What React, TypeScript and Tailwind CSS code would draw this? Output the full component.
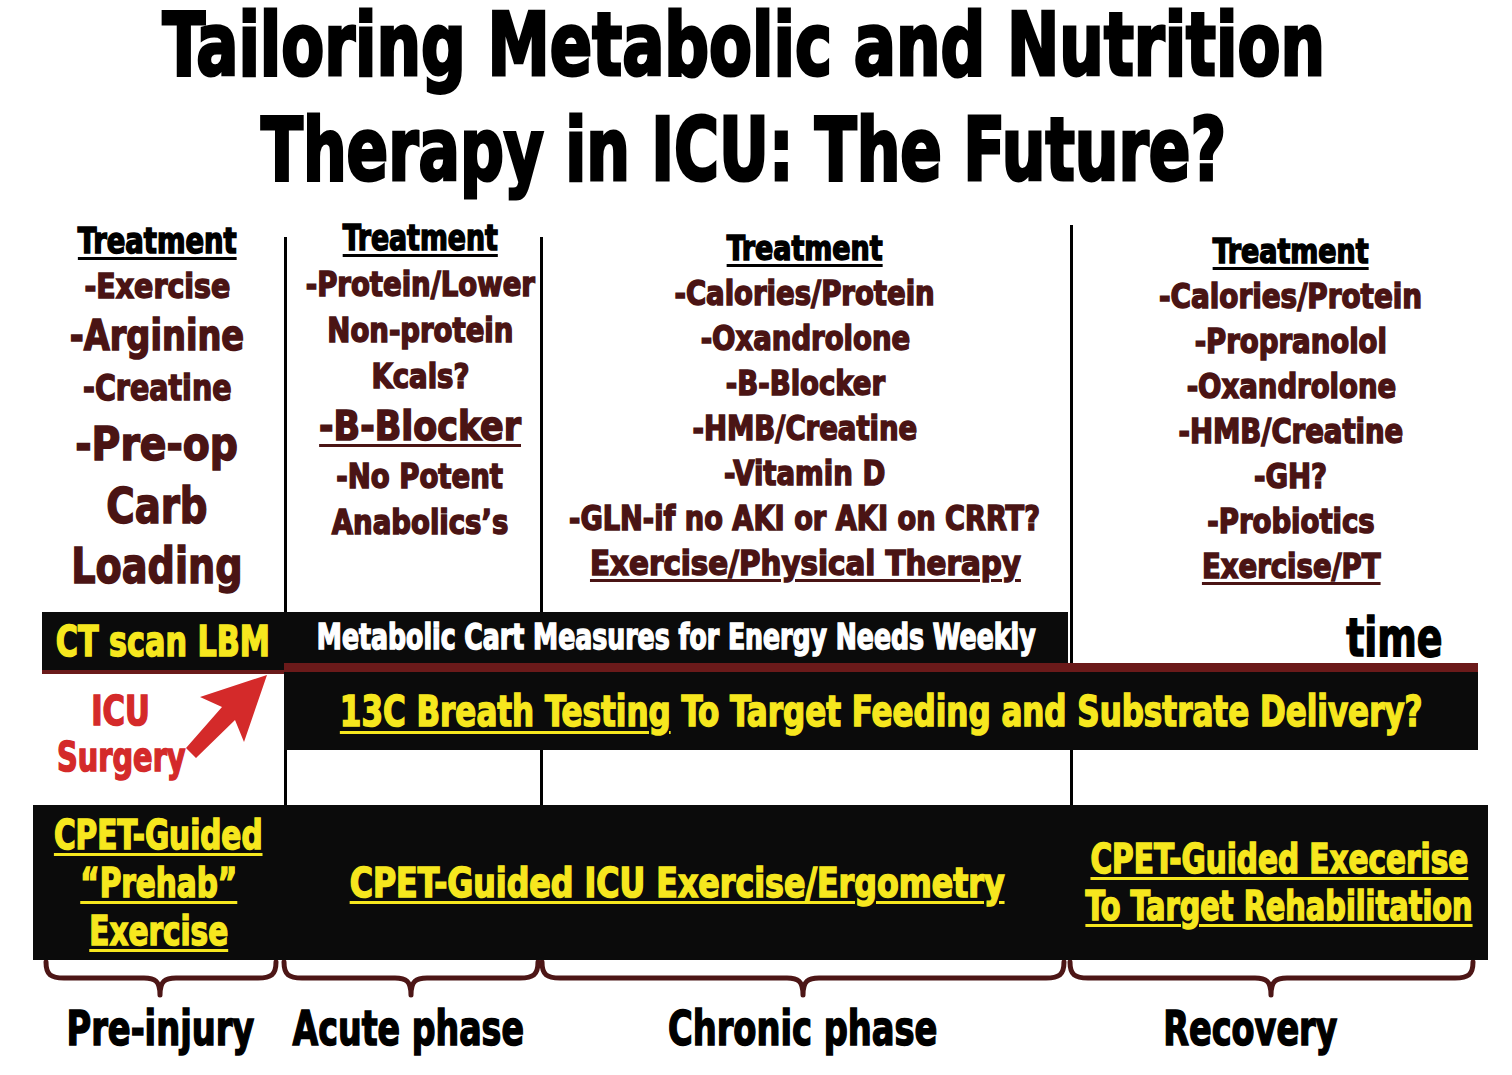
import React from 'react';

type Line = { t: string; cls: string; head?: boolean; u?: boolean };

// DejaVu Sans Condensed is still wider than the Impact-like face, so each line is squeezed with scale-x
const col1: Line[] = [
  { t: 'Treatment', cls: 'text-[35px] leading-[46px] scale-x-[0.87]', head: true },
  { t: '-Exercise', cls: 'text-[34px] leading-[45px] scale-x-[0.93]' },
  { t: '-Arginine', cls: 'text-[42px] leading-[53px] scale-x-[0.89]' },
  { t: '-Creatine', cls: 'text-[36px] leading-[51px] scale-x-[0.88]' },
  { t: '-Pre-op', cls: 'text-[46px] leading-[62px] scale-x-[0.95]' },
  { t: 'Carb', cls: 'text-[50px] leading-[62px] scale-x-[0.86]' },
  { t: 'Loading', cls: 'text-[50px] leading-[58px] scale-x-[0.85]' },
];

const col2: Line[] = [
  { t: 'Treatment', cls: 'text-[35px] leading-[46px] scale-x-[0.85]', head: true },
  { t: '-Protein/Lower', cls: 'text-[34px] leading-[46px] scale-x-[0.9]' },
  { t: 'Non-protein', cls: 'text-[34px] leading-[46px] scale-x-[0.9]' },
  { t: 'Kcals?', cls: 'text-[34px] leading-[46px] scale-x-[0.9]' },
  { t: '-B-Blocker', cls: 'text-[40px] leading-[54px] scale-x-[0.97]', u: true },
  { t: '-No Potent', cls: 'text-[34px] leading-[46px] scale-x-[0.9]' },
  { t: 'Anabolics’s', cls: 'text-[34px] leading-[46px] scale-x-[0.9]' },
];

const col3: Line[] = [
  { t: 'Treatment', cls: 'text-[34px] leading-[45px] scale-x-[0.88]', head: true },
  { t: '-Calories/Protein', cls: 'text-[34px] leading-[45px] scale-x-[0.9]' },
  { t: '-Oxandrolone', cls: 'text-[34px] leading-[45px] scale-x-[0.9]' },
  { t: '-B-Blocker', cls: 'text-[34px] leading-[45px] scale-x-[0.9]' },
  { t: '-HMB/Creatine', cls: 'text-[34px] leading-[45px] scale-x-[0.9]' },
  { t: '-Vitamin D', cls: 'text-[34px] leading-[45px] scale-x-[0.9]' },
  { t: '-GLN-if no AKI or AKI on CRRT?', cls: 'text-[34px] leading-[45px] scale-x-[0.89]' },
  { t: 'Exercise/Physical Therapy', cls: 'text-[34px] leading-[45px] scale-x-[0.96]', u: true },
];

const col4: Line[] = [
  { t: 'Treatment', cls: 'text-[34px] leading-[45px] scale-x-[0.88]', head: true },
  { t: '-Calories/Protein', cls: 'text-[34px] leading-[45px] scale-x-[0.91]' },
  { t: '-Propranolol', cls: 'text-[34px] leading-[45px] scale-x-[0.9]' },
  { t: '-Oxandrolone', cls: 'text-[34px] leading-[45px] scale-x-[0.9]' },
  { t: '-HMB/Creatine', cls: 'text-[34px] leading-[45px] scale-x-[0.9]' },
  { t: '-GH?', cls: 'text-[34px] leading-[45px] scale-x-[0.9]' },
  { t: '-Probiotics', cls: 'text-[34px] leading-[45px] scale-x-[0.9]' },
  { t: 'Exercise/PT', cls: 'text-[34px] leading-[45px] scale-x-[0.9]', u: true },
];

const TreatmentList = ({ lines }: { lines: Line[] }) => (
  <>
    {lines.map((l, i) => (
      <div
        key={i}
        className={`${l.cls} ${l.head ? 'text-black' : 'text-[#4a1414]'} ${
          l.head || l.u ? 'underline decoration-[3px] underline-offset-[4px]' : ''
        }`}
      >
        {l.t}
      </div>
    ))}
  </>
);

// curly brace opening upward, pointing down at xm
const brace = (x0: number, x1: number, xm: number) =>
  `M${x0},0 C${x0},13 ${x0 + 5},16 ${x0 + 18},16 L${xm - 16},16 C${xm - 5},16 ${xm},19 ${xm},33 C${xm},19 ${xm + 5},16 ${xm + 16},16 L${x1 - 18},16 C${x1 - 5},16 ${x1},13 ${x1},0`;

const yu = 'underline decoration-[3px] underline-offset-[4px]';

export default function App() {
  return (
    <div className="w-[1512px] h-[1075px] bg-white overflow-hidden whitespace-nowrap font-['Liberation_Sans_Narrow','DejaVu_Sans_Condensed','Liberation_Sans',sans-serif] font-bold [-webkit-text-stroke-width:1.5px]">
      {/* Title */}
      <div className="h-[210px] pr-[24px] flex flex-col items-center text-black text-[88px] [-webkit-text-stroke-width:3px]">
        <div className="leading-[90px] scale-x-[0.79]">Tailoring Metabolic and Nutrition</div>
        <div className="leading-[120px] scale-x-[0.775]">Therapy in ICU: The Future?</div>
      </div>

      {/* Phase grid */}
      <div className="grid grid-cols-[284px_256px_530px_442px] grid-rows-[402px_60px_78px_55px]">
        {/* vertical dividers */}
        <div className="col-start-2 row-start-1 row-span-4 mt-[27px] border-l-[3px] border-black" />
        <div className="col-start-3 row-start-1 row-span-4 mt-[27px] border-l-[3px] border-black" />
        <div className="col-start-4 row-start-1 row-span-4 mt-[15px] border-l-[3px] border-black" />

        <div className="col-start-1 row-start-1 pt-[8px] pl-[30px] flex flex-col items-center">
          <TreatmentList lines={col1} />
        </div>
        <div className="col-start-2 row-start-1 pt-[5px] pl-[16px] flex flex-col items-center">
          <TreatmentList lines={col2} />
        </div>
        <div className="col-start-3 row-start-1 pt-[16px] flex flex-col items-center">
          <TreatmentList lines={col3} />
        </div>
        <div className="col-start-4 row-start-1 pt-[19px] flex flex-col items-center">
          <TreatmentList lines={col4} />
        </div>

        {/* CT scan / metabolic cart row */}
        <div className="col-start-1 row-start-2 ml-[42px] self-start h-[62px] bg-[#0b0b0b] border-b-[4px] border-[#6b1a1a] flex items-center justify-center text-[42px] text-[#f6e71e]">
          <div className="scale-x-[0.8]">CT scan LBM</div>
        </div>
        <div className="col-start-2 col-span-3 row-start-2 mr-[34px] flex flex-col">
          <div className="flex h-[51px]">
            <div className="w-[784px] bg-[#0b0b0b] flex items-center justify-center text-[35px] text-white">
              <div className="scale-x-[0.8]">Metabolic Cart Measures for Energy Needs Weekly</div>
            </div>
            <div className="flex-1 pr-[36px] flex justify-end text-[54px] leading-[51px] text-black">
              <div className="origin-right scale-x-[0.78]">time</div>
            </div>
          </div>
          <div className="h-[9px] bg-[#6b1a1a]" />
        </div>

        {/* 13C breath testing */}
        <div className="col-start-2 col-span-3 row-start-3 mr-[34px] bg-[#0b0b0b] flex items-center justify-center text-[42px] text-[#f6e71e]">
          <div className="scale-x-[0.82]">
            <span className="underline decoration-[3px] underline-offset-[5px]">13C Breath Testing</span> To Target
            Feeding and Substrate Delivery?
          </div>
        </div>

        {/* ICU / Surgery with arrow */}
        <div className="col-start-1 row-start-3 row-span-2 relative">
          <div className="w-[242px] pt-[16px] flex flex-col items-center text-[40px] leading-[46px] text-[#d42a2a]">
            <div className="scale-x-[0.85]">ICU</div>
            <div className="scale-x-[0.8]">Surgery</div>
          </div>
          <svg className="absolute left-0 top-0 overflow-visible" width="284" height="133" viewBox="0 672 284 133">
            <polygon points="267,675 244,742 235,720 196,758 186,748 222,707 200,697" fill="#d42a2a" />
          </svg>
        </div>
      </div>

      {/* CPET bar */}
      <div className="ml-[33px] w-[1455px] h-[155px] bg-[#0b0b0b] grid grid-cols-[251px_786px_418px] items-center text-[40px] text-[#f6e71e]">
        <div className="flex flex-col items-center leading-[48px]">
          <div className={`${yu} scale-x-[0.82]`}>CPET-Guided</div>
          <div className={`${yu} scale-x-[0.82]`}>“Prehab”</div>
          <div className={`${yu} scale-x-[0.82]`}>Exercise</div>
        </div>
        <div className="flex justify-center">
          <div className={`${yu} scale-x-[0.88]`}>CPET-Guided ICU Exercise/Ergometry</div>
        </div>
        <div className="flex flex-col items-center leading-[47px]">
          <div className={`${yu} scale-x-[0.82]`}>CPET-Guided Execerise</div>
          <div className={`${yu} scale-x-[0.8]`}>To Target Rehabilitation</div>
        </div>
      </div>

      {/* braces */}
      <svg width="1512" height="38" viewBox="0 -2 1512 38" className="block">
        <g fill="none" stroke="#4d1616" strokeWidth="5" strokeLinecap="round" strokeLinejoin="round">
          <path d={brace(46, 276, 160)} />
          <path d={brace(284, 538, 411)} />
          <path d={brace(542, 1064, 803)} />
          <path d={brace(1070, 1473, 1271)} />
        </g>
      </svg>

      {/* phase labels */}
      <div className="flex text-[48px] leading-[60px] text-black">
        <div className="w-[320px] flex justify-center">
          <div className="scale-x-[0.78]">Pre-injury</div>
        </div>
        <div className="w-[176px] flex justify-center">
          <div className="scale-x-[0.77]">Acute phase</div>
        </div>
        <div className="w-[614px] flex justify-center">
          <div className="scale-x-[0.78]">Chronic phase</div>
        </div>
        <div className="w-[280px] flex justify-center">
          <div className="scale-x-[0.775]">Recovery</div>
        </div>
      </div>
    </div>
  );
}
